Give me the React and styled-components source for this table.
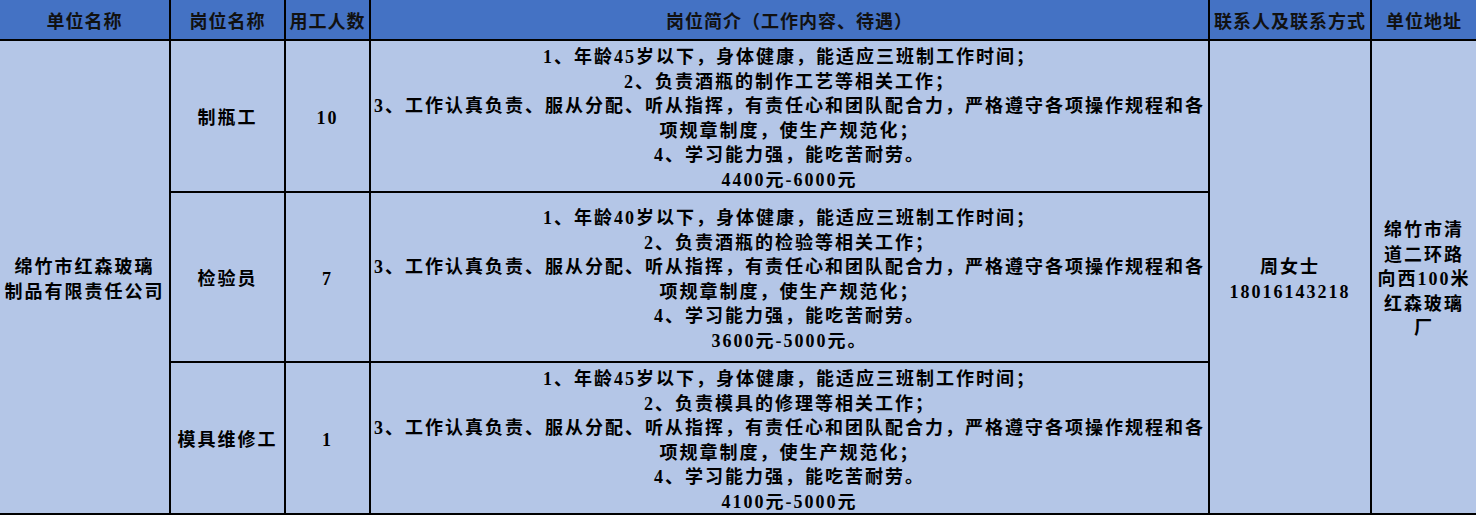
import React from "react";
import styled, { createGlobalStyle } from "styled-components";

const Global = createGlobalStyle`
  html, body { margin: 0; padding: 0; background: #ffffff; }
  body { font-family: "Liberation Serif", "Noto Sans CJK SC", serif; }
`;

const Grid = styled.div`
  width: 1476px;
  display: grid;
  grid-template-columns: 169px 113px 83px 837px 160px 104px;
  grid-template-rows: 39px 150px 168px 150px;
  column-gap: 2px;
  row-gap: 2px;
  padding-bottom: 2px;
  background: #000000;
`;

const Cell = styled.div`
  box-sizing: border-box;
  background: ${(p) => (p.$head ? "#4472C4" : "#B4C6E7")};
  color: ${(p) => (p.$head ? "#111111" : "#000000")};
  display: flex;
  flex-direction: column;
  align-items: center;
  justify-content: center;
  text-align: center;
  padding-top: 5px;
  font-family: "Liberation Serif", "Noto Sans CJK SC", serif;
  font-weight: 700;
  font-size: 18px;
  letter-spacing: ${(p) => (p.$head ? "1px" : "2px")};
  line-height: 24.5px;
  white-space: nowrap;
  overflow: hidden;
  grid-row: ${(p) => p.$row || "auto"};
  grid-column: ${(p) => p.$col || "auto"};
`;

const Line = styled.div`
  display: block;
`;

const headers = [
  "单位名称",
  "岗位名称",
  "用工人数",
  "岗位简介（工作内容、待遇）",
  "联系人及联系方式",
  "单位地址",
];

const jobs = [
  {
    name: "制瓶工",
    count: "10",
    lines: [
      "1、年龄45岁以下，身体健康，能适应三班制工作时间；",
      "2、负责酒瓶的制作工艺等相关工作；",
      "3、工作认真负责、服从分配、听从指挥，有责任心和团队配合力，严格遵守各项操作规程和各",
      "项规章制度，使生产规范化；",
      "4、学习能力强，能吃苦耐劳。",
      "4400元-6000元",
    ],
  },
  {
    name: "检验员",
    count: "7",
    lines: [
      "1、年龄40岁以下，身体健康，能适应三班制工作时间；",
      "2、负责酒瓶的检验等相关工作；",
      "3、工作认真负责、服从分配、听从指挥，有责任心和团队配合力，严格遵守各项操作规程和各",
      "项规章制度，使生产规范化；",
      "4、学习能力强，能吃苦耐劳。",
      "3600元-5000元。",
    ],
  },
  {
    name: "模具维修工",
    count: "1",
    lines: [
      "1、年龄45岁以下，身体健康，能适应三班制工作时间；",
      "2、负责模具的修理等相关工作；",
      "3、工作认真负责、服从分配、听从指挥，有责任心和团队配合力，严格遵守各项操作规程和各",
      "项规章制度，使生产规范化；",
      "4、学习能力强，能吃苦耐劳。",
      "4100元-5000元",
    ],
  },
];

const address = ["绵竹市清", "道二环路", "向西100米", "红森玻璃", "厂"];

export default function App() {
  return (
    <>
      <Global />
      <Grid>
        {headers.map((h) => (
          <Cell key={h} $head>
            {h}
          </Cell>
        ))}
        <Cell $col="1" $row="2 / span 3">
          <Line>绵竹市红森玻璃</Line>
          <Line>制品有限责任公司</Line>
        </Cell>
        {jobs.map((j, i) => (
          <React.Fragment key={j.name}>
            <Cell $col="2" $row={`${i + 2}`}>{j.name}</Cell>
            <Cell $col="3" $row={`${i + 2}`}>{j.count}</Cell>
            <Cell $col="4" $row={`${i + 2}`}>
              {j.lines.map((l, k) => (
                <Line key={k}>{l}</Line>
              ))}
            </Cell>
          </React.Fragment>
        ))}
        <Cell $col="5" $row="2 / span 3">
          <Line>周女士</Line>
          <Line>18016143218</Line>
        </Cell>
        <Cell $col="6" $row="2 / span 3">
          {address.map((a) => (
            <Line key={a}>{a}</Line>
          ))}
        </Cell>
      </Grid>
    </>
  );
}
